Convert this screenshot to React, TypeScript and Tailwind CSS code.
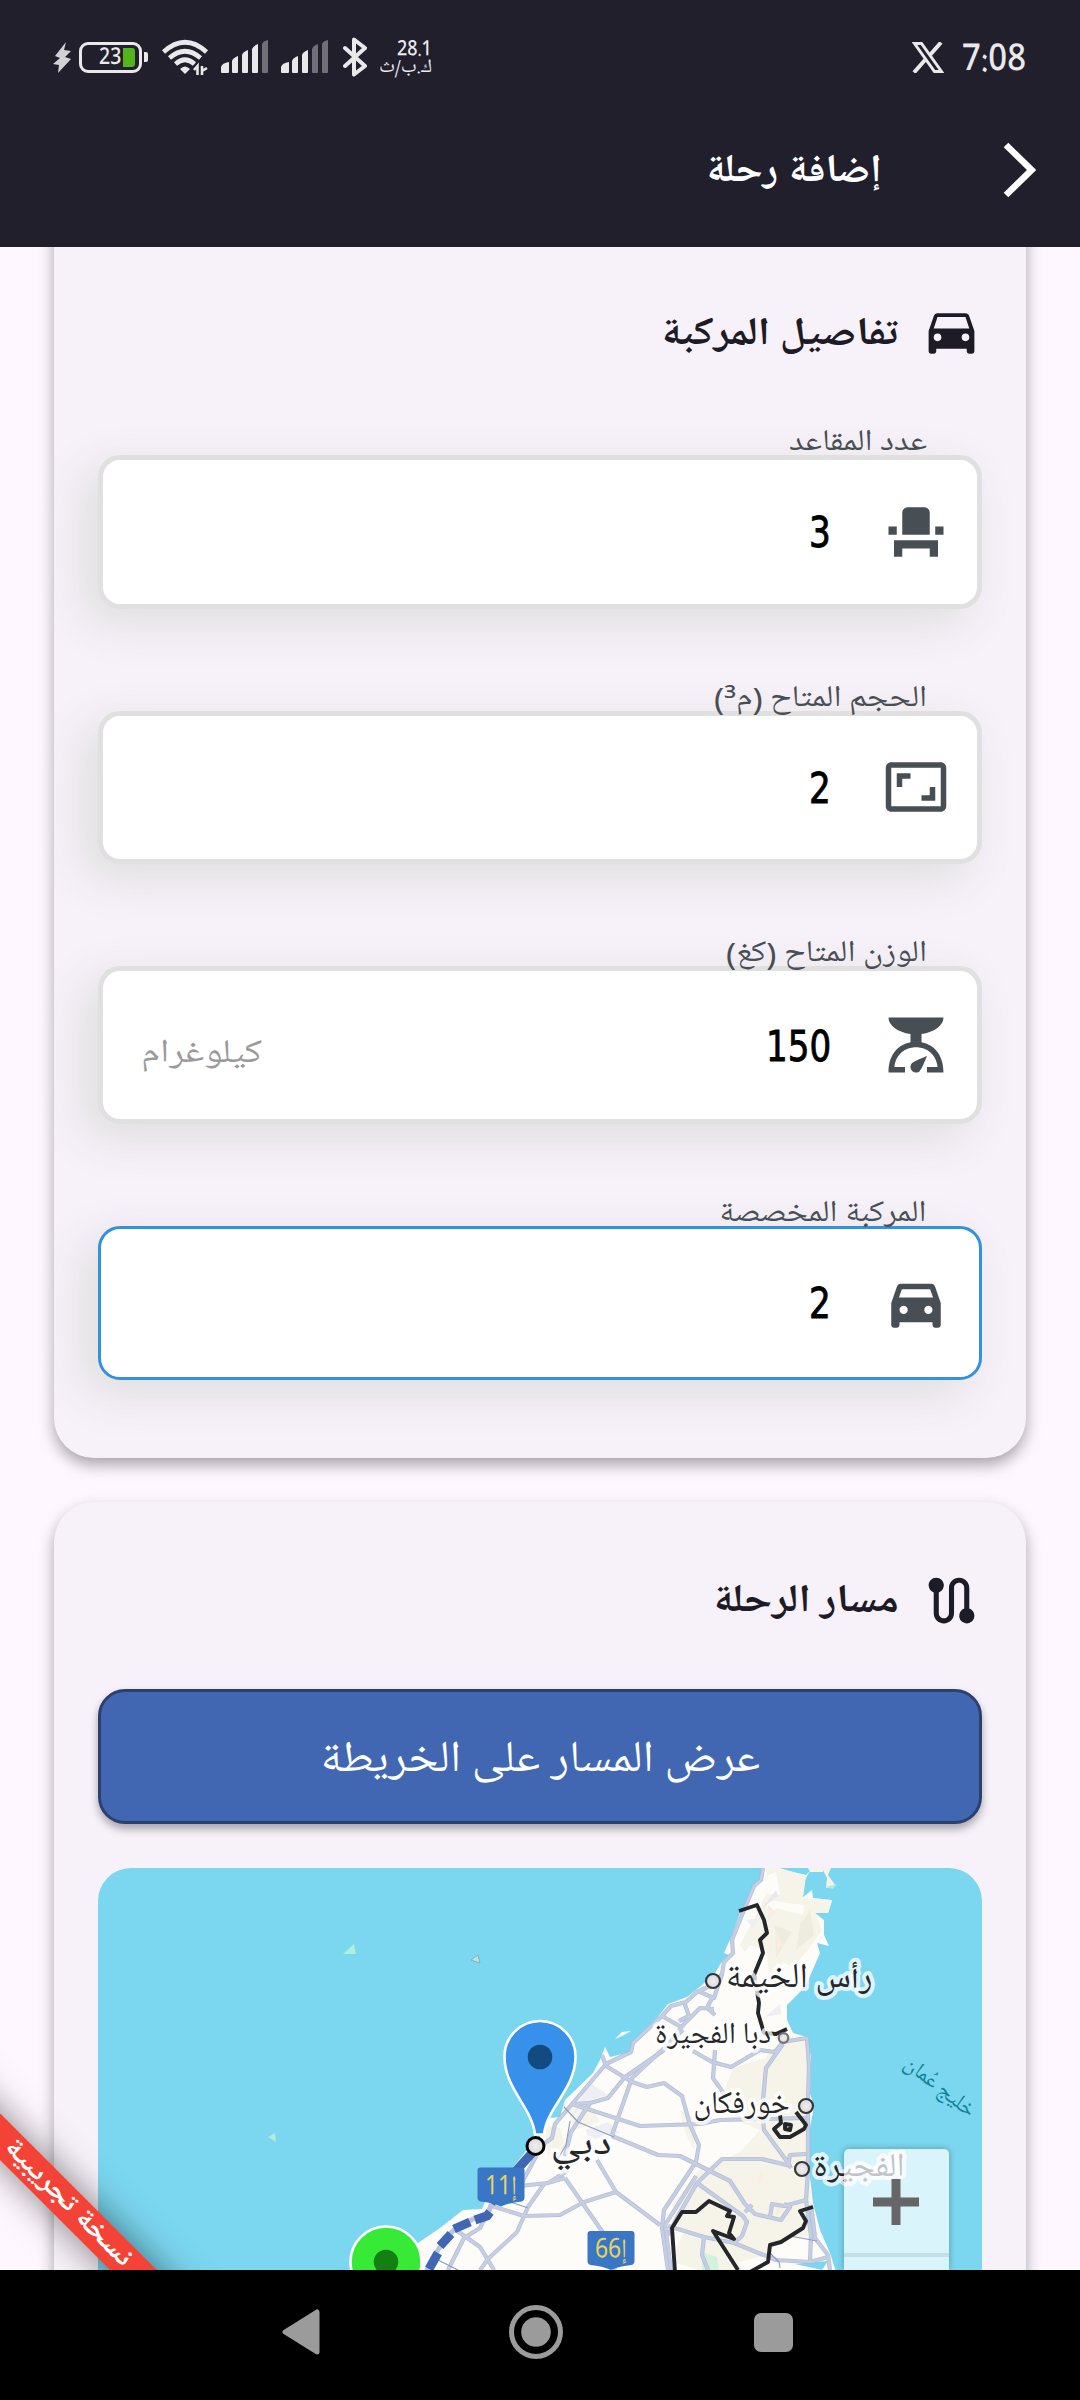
import { useLayoutEffect, useRef, useState, type ReactNode } from "react";
import { MdEventSeat, MdAspectRatio, MdRoute } from "react-icons/md";

/** Text squeezed or stretched horizontally so that it takes exactly `width` pixels. */
function FitText({ width, className, children }: { width: number; className: string; children: ReactNode }) {
  const ref = useRef<HTMLSpanElement>(null);
  const [scale, setScale] = useState(1);
  useLayoutEffect(() => {
    if (ref.current) setScale(width / ref.current.offsetWidth);
  }, [width]);
  return (
    <span className="flex shrink-0 justify-start overflow-visible" style={{ width }}>
      <span
        ref={ref}
        className={`inline-block shrink-0 origin-right whitespace-nowrap ${className}`}
        style={{ transform: `scaleX(${scale})` }}
      >
        {children}
      </span>
    </span>
  );
}

function SignalBars({ active }: { active: number }) {
  const bars = [
    "M0 31v-5q1-4 8-5v10q0 1-1 1H1q-1 0-1-1z",
    "M11 31V20q1-3 6-5v16q0 1-1 1h-4q-1 0-1-1z",
    "M21 31V14q1-3 6-5v22q0 1-1 1h-4q-1 0-1-1z",
    "M31 31V8q1-3 6-5v28q0 1-1 1h-4q-1 0-1-1z",
    "M41 31V3q1-3 6-4v32q0 1-1 1h-4q-1 0-1-1z",
  ];
  return (
    <svg className="h-[34px] w-[48px]" viewBox="0 -1 48 34">
      {bars.map((d, i) => (
        <path key={i} d={d} fill={i < active ? "#e9e9ea" : "#716f78"} />
      ))}
    </svg>
  );
}

function StatusBar() {
  return (
    <div dir="ltr" className="flex h-[114px] items-center pr-[54px] pl-[53px] text-[#e9e9ea]">
      <svg className="h-[31px] w-[18px]" viewBox="0 0 18 31">
        <path d="M13 0L2 14l5 2-7 6 6 1-1 8 13-14-6-2 6-6-7-1z" fill="#d2d2d4" />
      </svg>
      <div className="ml-2 flex h-[31px] w-[63px] items-center rounded-[9px] border-[3px] border-[#e9e9ea] pl-[17px]">
        <div dir="rtl" className="pt-[2px]">
          <FitText width={22} className="text-[23px] leading-none font-medium">23</FitText>
        </div>
        <div className="ml-[2px] h-[19px] w-[12px] rounded-r-[3px] bg-[#52b51b]" />
      </div>
      <div className="ml-[2px] h-[10px] w-[4px] rounded-r-[2px] bg-[#e9e9ea]" />
      <svg className="ml-[13px] h-[36px] w-[48px]" viewBox="0 0 48 36" fill="none" stroke="#e9e9ea" strokeWidth="4.600">
        <path d="M2.500 13Q24 -6.500 45.500 13" />
        <path d="M8.500 19Q24 5.500 39.500 19" />
        <path d="M14.500 25Q24 16.500 33.500 25" />
        <path d="M19 30q5-5 10 0l-5 5z" fill="#e9e9ea" stroke="none" />
        <path d="M33 31l3.500-4v9M41 36v-9M41 27v5l5-3" strokeWidth="2.600" />
      </svg>
      <div className="ml-[12px]"><SignalBars active={4} /></div>
      <div className="ml-[12px]"><SignalBars active={3} /></div>
      <svg className="ml-[14px] h-[40px] w-[24px]" viewBox="0 0 24 40" fill="none" stroke="#e9e9ea" strokeWidth="4" strokeLinejoin="round" strokeLinecap="round">
        <path d="M2 11l20 18-11 8.500V2.500L22 11 2 29" />
      </svg>
      <div className="ml-[11px] flex w-[54px] flex-col items-end pt-[3px]">
        <div dir="rtl">
          <FitText width={35} className="text-[21px] leading-[20px] font-medium">28.1</FitText>
        </div>
        <div dir="rtl">
          <FitText width={53} className="text-[19px] leading-[17px]">ك.ب/ث</FitText>
        </div>
      </div>
      <div className="flex-1" />
      <svg className="mr-[1px] h-[31px] w-[32px]" viewBox="0 0 32 31" fill="none" stroke="#e9e9ea">
        <path d="M2.500 1.500h7L29.500 29.500h-7z" strokeWidth="3" />
        <path d="M29 .5L18 13M13 18L2 30.500" strokeWidth="4" />
      </svg>
      <div className="ml-[17px] pt-[6px]" dir="rtl">
        <FitText width={64} className="text-[37px] leading-none font-medium">7:08</FitText>
      </div>
    </div>
  );
}

function CarThin() {
  return (
    <svg className="h-[61px] w-[61px]" viewBox="0 0 24 24" fill="currentColor">
      <path fillRule="evenodd" d="M18.920 5.010C18.720 4.420 18.160 4 17.500 4h-11c-.66 0-1.210.42-1.420 1.010L3 11v8c0 .55.45 1 1 1h1c.55 0 1-.45 1-1v-1h12v1c0 .55.45 1 1 1h1c.55 0 1-.45 1-1v-8l-2.080-5.990zM6.500 15a1.500 1.500 0 110-3 1.500 1.500 0 010 3zm11 0a1.500 1.500 0 110-3 1.500 1.500 0 010 3zM5 10l1.500-4.500h11L19 10H5z" />
    </svg>
  );
}

function CarThick() {
  return (
    <svg className="h-[66px] w-[66px]" viewBox="0 0 24 24" fill="currentColor">
      <path fillRule="evenodd" d="M18.920 6.010C18.720 5.420 18.160 5 17.500 5h-11c-.66 0-1.210.42-1.420 1.010L3 12v8c0 .55.45 1 1 1h1c.55 0 1-.45 1-1v-1h12v1c0 .55.45 1 1 1h1c.55 0 1-.45 1-1v-8l-2.080-5.990zM7.500 16a1.500 1.500 0 110-3 1.500 1.500 0 010 3zm9 0a1.500 1.500 0 110-3 1.500 1.500 0 010 3zM5.810 10L6.850 7h10.290l1.040 3H5.810z" />
    </svg>
  );
}

function ScaleIcon() {
  return (
    <svg className="h-[66px] w-[66px]" viewBox="0 0 24 24" fill="currentColor">
      <path d="M14 11V8c4.560-.58 8-3.100 8-6H2c0 2.900 3.440 5.420 8 6v3c-3.680.73-8 3.610-8 11h6v-2H4.130c.93-6.830 6.650-7.200 7.870-7.200s6.940.37 7.870 7.200H16v2h6c0-7.390-4.320-10.270-8-11z" />
      <path d="M12 22c-1.100 0-2-.9-2-2 0-.55.22-1.050.59-1.410C11.390 17.790 16 16 16 16s-1.790 4.610-2.590 5.410c-.36.370-.86.590-1.410.590z" />
    </svg>
  );
}

/** Brackets and superscripts of a label, set in the sans face. */
function Sans({ children }: { children: string }) {
  return <span className="font-['Noto_Sans'] leading-none">{children}</span>;
}

type FieldProps = {
  label: ReactNode;
  labelWidth: number;
  value: string;
  valueWidth: number;
  icon: ReactNode;
  suffix?: string;
  focused?: boolean;
  tall?: boolean;
};

function Field({ label, labelWidth, value, valueWidth, icon, suffix, focused, tall }: FieldProps) {
  return (
    <div
      className={`relative flex items-center rounded-[22px] bg-white shadow-[-14px_14px_48px_#dedede] ${tall ? "h-[158px]" : "h-[153.500px]"} ${
        focused ? "border-[3px] border-[#3391e0] px-[30.500px]" : "border-[5.500px] border-[#e0e0e0] px-[28px]"
      }`}
    >
      <div className={`absolute text-[#484e55] ${focused ? "-top-[37px] right-[53px]" : "-top-[39px] right-[50px]"}`}>
        <FitText width={labelWidth} className="text-[30px] leading-[44px]">{label}</FitText>
      </div>
      <span className="text-[#474e54]">{icon}</span>
      <span className="mt-[3px] mr-[52px] text-black">
        <FitText width={valueWidth} className="font-['DejaVu_Sans'] text-[42px] leading-none [-webkit-text-stroke:0.9px_#000]">{value}</FitText>
      </span>
      {suffix && (
        <span className="mt-[16px] mr-auto ml-[10px] text-[#9a9a9a]">
          <FitText width={121} className="text-[33px] leading-none">{suffix}</FitText>
        </span>
      )}
    </div>
  );
}

const ROADS = [
  "M763 1868L761 1880 754 1886 742 1915 732 1940 733 1953 724 1962 722 1974 712 1985 697 1992 686 2002 671 2006 662 2016 633 2043 631 2052 606 2064 572 2104 555 2124 552 2138 541 2146 531 2166 520 2186 512 2193",
  "M684 2002L689 2016 679 2021M662 2016L683 2028M722 1974L714 1998 700 1992M712 1998L707 2008 715 2015M714 2009L700 2008 684 2024 664 2050 625 2077 608 2098 590 2103 572 2104",
  "M602 2055L606 2066 632 2082 647 2087 664 2083 682 2096 690 2125 699 2145 696 2162 664 2210 662 2228 668 2270",
  "M572 2104L640 2126 700 2124 720 2120 806 2118M683 2030L660 2052 632 2078 612 2135",
  "M693 2051L712 2062 731 2067 760 2050 775 2052 783 2042 807 2038 809 2065 808 2100 808 2170 806 2200 811 2235 810 2262",
  "M783 2044L766 2068 762 2110 764 2130 786 2160 791 2168M806 2154L790 2155 788 2166",
  "M590 2103L571 2132 565 2156M565 2178L604 2234 615 2270M597 2160L616 2192 660 2225",
  "M565 2178L544 2184 528 2207 517 2232 489 2258 480 2270M520 2186L548 2183 569 2170M616 2192L584 2202 560 2215 524 2216 492 2206",
  "M489 2210L480 2228 464 2238 448 2270M456 2230L480 2247 494 2270",
  "M612 2136L658 2155 680 2156 730 2181 745 2204 755 2214 781 2220 790 2207 784 2204",
  "M791 2166L762 2159 722 2159 697 2183 678 2216 668 2235",
  "M696 2176L665 2225 671 2270M697 2183L743 2216 747 2222 742 2236 734 2243 704 2237 668 2226M745 2212L752 2205M704 2237L702 2255 708 2270",
  "M734 2243L776 2260 810 2262 828 2257M811 2205L815 2238 828 2255 830 2270M806 2200L784 2206 772 2204 770 2217",
  "M715 2050L713 2078 724 2094",
];

const BORDERS = [
  "M739 1911L757 1905 764 1920 767 1933 760 1940 763 1953 754 1975 759 2003 758 2013 764 2033 776 2034 787 2029",
  "M796 2112L803 2121 806 2125 804 2129 790 2137 780 2137 774 2129 781 2123 780 2115M785 2124l6 1-1 5-5-1z",
  "M675 2272L672 2228 682 2212 696 2212 709 2201 730 2211 727 2216 734 2217 729 2233 734 2239 713 2231 738 2270",
  "M813 2207L800 2211 806 2221 803 2228 781 2242 770 2245 768 2262 750 2272",
];

function CityLabel({ x, y, width, size, children }: { x: number; y: number; width: number; size: number; children: string }) {
  return (
    <text
      x={x}
      y={y}
      fontSize={size}
      textAnchor="middle"
      textLength={width}
      lengthAdjust="spacingAndGlyphs"
      fill="#26272b"
      stroke="#ffffff"
      strokeOpacity="0.75"
      strokeWidth="8"
      strokeLinejoin="round"
      paintOrder="stroke"
    >
      {children}
    </text>
  );
}

function Shield({ x, y, n }: { x: number; y: number; n: string }) {
  return (
    <g transform={`translate(${x} ${y})`}>
      <path d="M3 0H44q3 0 3 3V30q0 3-3 4-12 1-20.500 5Q15 35 3 34q-3-1-3-4V3Q0 0 3 0z" fill="#3a76c6" />
      <text x="23.500" y="30" fontSize="27" textAnchor="middle" textLength="32" lengthAdjust="spacingAndGlyphs" fill="#e6d45c">{n}</text>
    </g>
  );
}

function RouteMap() {
  return (
    <svg className="block h-[402px] w-full" viewBox="98 1868 884 402">
      <defs>
        <radialGradient id="dot"><stop offset="0" stopColor="#efefef" /><stop offset="1" stopColor="#d9d9d9" /></radialGradient>
      </defs>
      <rect x="98" y="1868" width="884" height="402" fill="#7bd6ef" />
      <path d="M343 1954L354 1944 356 1954zM268 2137L275 2133 276 2142z" fill="#aeeedb" />
      <path d="M471 1960L478 1955 480 1963z" fill="#aeeedb" stroke="#94a5cb" />
      <path d="M615 2039L622 2032 631 2031 622 2036z" fill="#fffefa" />
      <path
        fill="#fefcf8"
        d="M763 1868L761 1880 757 1883 740 1913 732 1935 724 1953 729 1955 723 1960 715 1973 702 1985 687 1997 668 2004 657 2018 632 2042 630 2052 610 2057 605 2047 600 2060 593 2073 565 2100 560 2117 550 2118 547 2115 543 2127 540 2137 527 2150 513 2167 490 2190 482 2209 463 2210 440 2228 418 2243 396 2272 H836L830 2253 820 2230 813 2203 810 2177 810 2127 814 2107 810 2093 811 2057 807 2037 793 2033 787 2020 787 2005 800 1992 807 1983 820 1953 817 1943 829 1946 824 1935 824 1920 815 1913 828 1913 832 1900 813 1898 812 1890 802 1898 803 1883 810 1871 806 1875 780 1869V1868z"
      />
      <path d="M822 1868H831L828 1875 836 1886 826 1888 827 1878zM808 1868H823L823 1872 810 1872z" fill="#f6f3e8" />
      <path d="M826 1887L836 1884 833 1889z" fill="#aeeedb" />
      <g fill="#f6f3e8">
        <path d="M766 1868H780L806 1876 803 1898 832 1901 828 1913 815 1913 822 1930 808 1950 793 1968 783 1962 772 1990 766 1950 750 1945 745 1952 740 1945 756 1915 768 1890z" />
        <path d="M786 2035L806 2038 810 2070 809 2110 809 2177 812 2203 818 2235 780 2240 765 2255 740 2262 700 2240 676 2225 672 2205 700 2170 740 2152 760 2130 716 2112 733 2068 765 2058z" />
        <path d="M568 2108L590 2105 600 2122 574 2130zM545 2126L560 2128 566 2148 548 2156zM680 2110L697 2120 694 2150 684 2130zM700 2200L680 2240 672 2262 700 2270 742 2270 730 2240z" />
      </g>
      <g fill="#fefcf8">
        <path d="M766 1900L804 1905 803 1915 776 1908 770 1918zM716 2130L729 2152 700 2155zM740 1960L760 1965 752 1985 730 1978zM768 1875L776 1872 780 1895 764 1893z" />
      </g>
      <g fill="#eeecdf">
        <path d="M810 1910L814 1935 796 1950 800 1925zM775 1925L792 1932 776 1958z" />
        <path d="M762 1908L776 1890 778 1896z" fill="#e8e9f0" />
        <path d="M746 1920L760 1918 753 1928zM765 2017L780 2004 781 2014zM572 2115L590 2082 608 2095 592 2100zM585 2130L608 2122 620 2133 590 2140z" fill="#edeff4" />
        <path d="M768 1905L776 1912 768 1922zM776 1930L783 1945 777 1950zM762 2170L762 2182 758 2183zM776 2200L786 2205 776 2216z" fill="#f9eee1" />
        <path d="M702 2252L717 2257 719 2270H702z" fill="#d2f2de" />
      </g>
      <path d="M795 2264L828 2261 822 2270zM783 2262L799 2265" fill="#7bd6ef" />
      <g fill="none" strokeLinejoin="round">
        {ROADS.map((d, i) => <path key={i} d={d} stroke="#a9b5d8" strokeWidth="4.200" strokeOpacity="0.85" />)}
        {ROADS.map((d, i) => <path key={i} d={d} stroke="#c6cfe2" strokeWidth="2.500" />)}
        <path d="M564 2107L578 2122 614 2137M570 2121L566 2145 557 2160M505 2200L528 2208M438 2260L458 2270M790 2236L817 2241M770 2253L779 2262 780 2268" stroke="#8e9cc9" strokeWidth="1.200" />
        {BORDERS.map((d, i) => <path key={i} d={d} stroke="#24262a" strokeWidth="3.900" />)}
        <path d="M532 2152L516 2172 494 2198 488 2213 473 2219 456 2228 445 2239 436 2253 426 2272" stroke="#b9c4de" strokeWidth="5" />
        <path d="M532 2153L514 2173 491 2203M490 2212L487 2216 475 2220M470 2222L454 2229M451 2234L440 2246M438 2253L429 2269" stroke="#4067b4" strokeWidth="9" />
      </g>
      <g stroke="#36373b" strokeWidth="2.200" fill="url(#dot)">
        <circle cx="713" cy="1981" r="7" />
        <circle cx="783.500" cy="2038" r="4.800" stroke="#707277" />
        <circle cx="806" cy="2106" r="7" />
        <circle cx="802" cy="2169" r="7" />
        <circle cx="535.500" cy="2146" r="8.500" stroke="#050505" strokeWidth="3" />
      </g>
      <CityLabel x={799} y={1992} width={147} size={35}>رأس الخيمة</CityLabel>
      <CityLabel x={713} y={2047} width={116} size={30}>دبا الفجيرة</CityLabel>
      <CityLabel x={741.500} y={2117} width={96} size={32}>خورفكان</CityLabel>
      <CityLabel x={859} y={2180} width={91} size={33}>الفجيرة</CityLabel>
      <CityLabel x={581} y={2159} width={61} size={38}>دبي</CityLabel>
      <text transform="translate(934 2094) rotate(38)" fontSize="22" textAnchor="middle" textLength="84" lengthAdjust="spacingAndGlyphs" fill="#148397">خليج عُمان</text>
      <Shield x={477.500} y={2167.500} n="إ11" />
      <Shield x={587.500} y={2231} n="إ66" />
      <path d="M535 2134.500C532 2107 504.500 2089 504.500 2056.500a35.500 35.500 0 0171 0C575.500 2089 547 2107 544 2134.500z" fill="#3790ea" stroke="#fff" strokeWidth="2.600" />
      <circle cx="540" cy="2057" r="12.300" fill="#134a80" />
      <circle cx="386" cy="2262" r="35.500" fill="#36ea36" stroke="#fff" strokeWidth="2.600" />
      <circle cx="386" cy="2262" r="12.300" fill="#128012" />
    </svg>
  );
}

function ZoomControl() {
  return (
    <div className="absolute top-[281px] right-[33.500px] h-[121px] w-[105px] overflow-hidden rounded-t-[5px] bg-white/72 shadow-[0_0_6px_rgba(0,0,0,0.3)]">
      <div className="flex h-[108px] items-center justify-center border-b-[4px] border-[#c5dfe6] pt-[2px]">
        <svg className="h-[46px] w-[46px]" viewBox="0 0 46 46" stroke="#666" strokeWidth="9">
          <path d="M0 23H46M23 0V46" />
        </svg>
      </div>
    </div>
  );
}

function SectionTitle({ icon, width, children }: { icon: ReactNode; width: number; children: string }) {
  return (
    <div className="flex items-center gap-[22.500px] text-[#1c1b26]">
      {icon}
      <span className="pt-[2px]">
        <FitText width={width} className="text-[39px] leading-[58px] font-bold">{children}</FitText>
      </span>
    </div>
  );
}

export default function App() {
  return (
    <div
      dir="rtl"
      className="relative flex h-[2400px] w-[1080px] flex-col overflow-hidden bg-[#fef7ff] font-['Noto_Naskh_Arabic_UI','Noto_Naskh_Arabic','Noto_Sans_Arabic','Noto_Sans','DejaVu_Sans',sans-serif]"
    >
      <header className="relative z-10 h-[247px] shrink-0 bg-[#221f2d]">
        <StatusBar />
        <div className="flex h-[112px] items-center pr-[44px] text-white">
          <svg className="h-[56px] w-[33px]" viewBox="0 0 33 56" fill="none" stroke="#fff" strokeWidth="6.500">
            <path d="M3 3L28.500 28 3 53" />
          </svg>
          <span className="mt-[4px] mr-[121px]">
            <FitText width={177} className="text-[39px] leading-[60px] font-bold">إضافة رحلة</FitText>
          </span>
        </div>
      </header>

      <main className="relative h-[2023px] shrink-0 overflow-hidden px-[54px]">
        <section className="-mt-[30px] h-[1241px] rounded-b-[40px] bg-[#f7f1f9] px-[44px] pt-[86px] shadow-[0_7px_15px_rgba(0,0,0,0.34)]">
          <SectionTitle icon={<CarThin />} width={238}>تفاصيل المركبة</SectionTitle>
          <div className="mt-[91px] flex flex-col gap-[102px]">
            <Field label="عدد المقاعد" labelWidth={138} value="3" valueWidth={22} icon={<MdEventSeat size={66} />} />
            <Field
              label={<>الحجم المتاح <Sans>(</Sans>م<Sans>³</Sans><Sans>)</Sans></>}
              labelWidth={213}
              value="2"
              valueWidth={22}
              icon={<MdAspectRatio size={66} />}
            />
            <Field
              label={<>الوزن المتاح <Sans>(</Sans>كغ<Sans>)</Sans></>}
              labelWidth={201}
              value="150"
              valueWidth={65}
              icon={<ScaleIcon />}
              suffix="كيلوغرام"
              tall
            />
            <Field label="المركبة المخصصة" labelWidth={207} value="2" valueWidth={22} icon={<CarThick />} focused />
          </div>
        </section>

        <section className="mt-[44px] h-[900px] rounded-t-[40px] bg-[#f7f1f9] px-[44px] pt-[68px] shadow-[0_7px_15px_rgba(0,0,0,0.34)]">
          <SectionTitle icon={<MdRoute size={61} />} width={187}>مسار الرحلة</SectionTitle>
          <button className="mt-[58px] flex h-[135px] w-full items-center justify-center rounded-[27px] border-[3px] border-[#2b4070] bg-[#4267b2] pt-[6px] text-white shadow-[0_5px_9px_rgba(0,0,0,0.32)]">
            <FitText width={440} className="text-[44px] leading-[60px]">عرض المسار على الخريطة</FitText>
          </button>
          <div className="relative mt-[44px] overflow-hidden rounded-t-[33px]">
            <RouteMap />
            <ZoomControl />
          </div>
        </section>

        <div className="absolute top-[1940px] left-[-113px] flex h-[32.500px] w-[360px] rotate-45 items-center justify-center bg-[#f44336] text-white shadow-[0_0_36px_rgba(0,0,0,0.5)]">
          <FitText width={170} className="text-[27px] leading-[32px] font-bold">نسخة تجريبية</FitText>
        </div>
      </main>

      <nav dir="ltr" className="flex h-[130px] shrink-0 items-center bg-black pb-[6px] pl-[282px]">
        <svg className="h-[46px] w-[38px]" viewBox="0 0 38 46">
          <path d="M3 23L35 3V43z" fill="#9b9b9b" stroke="#9b9b9b" strokeWidth="5" strokeLinejoin="round" />
        </svg>
        <svg className="ml-[189px] h-[54px] w-[54px]" viewBox="0 0 54 54">
          <circle cx="27" cy="27" r="24.500" fill="none" stroke="#9b9b9b" strokeWidth="5" />
          <circle cx="27" cy="27" r="14.800" fill="#9b9b9b" />
        </svg>
        <div className="ml-[191px] h-[39px] w-[39px] rounded-[7px] bg-[#9b9b9b]" />
      </nav>
    </div>
  );
}
